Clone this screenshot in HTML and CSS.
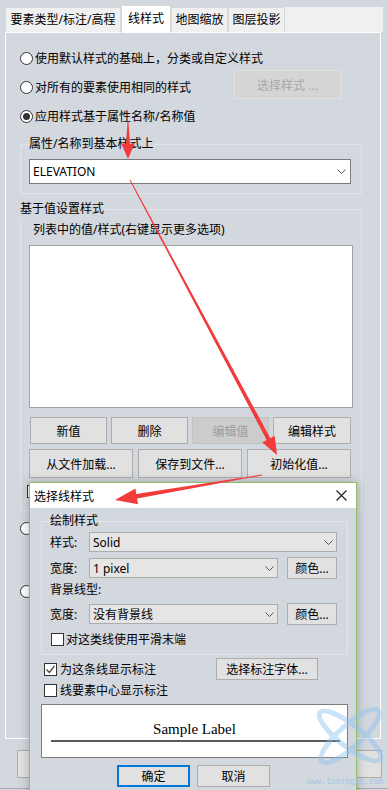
FILE: index.html
```html
<!DOCTYPE html>
<html lang="zh-CN">
<head>
    <meta charset="UTF-8">
    <title>线样式</title>
    <link rel="stylesheet" href="styles.css">
</head>
<body>
    <div class="app">
        <div class="tabs">
            <div class="tab tab-wide">要素类型/标注/高程</div>
            <div class="tab active">线样式</div>
            <div class="tab">地图缩放</div>
            <div class="tab">图层投影</div>
        </div>

        <div class="panel">
            <div class="option"><span class="radio"></span>使用默认样式的基础上，分类或自定义样式</div>
            <div class="option">
                <span class="radio"></span>对所有的要素使用相同的样式
                <button class="btn btn-style" disabled>选择样式 ...</button>
            </div>
            <div class="option"><span class="radio checked"></span>应用样式基于属性名称/名称值</div>

            <fieldset class="group group-field">
                <legend>属性/名称到基本样式上</legend>
                <div class="combo combo-white">
                    <span>ELEVATION</span>
                    <svg width="9" height="5" viewBox="0 0 9 5"><polyline points="0.5,0.5 4.5,4.5 8.5,0.5" fill="none" stroke="#555"/></svg>
                </div>
            </fieldset>

            <fieldset class="group group-values">
                <legend>基于值设置样式</legend>
                <div class="list-caption">列表中的值/样式(右键显示更多选项)</div>
                <div class="listbox"></div>
                <div class="btn-row btn-row-4">
                    <button class="btn">新值</button>
                    <button class="btn">删除</button>
                    <button class="btn btn-off" disabled>编辑值</button>
                    <button class="btn">编辑样式</button>
                </div>
                <div class="btn-row btn-row-3">
                    <button class="btn">从文件加载...</button>
                    <button class="btn">保存到文件...</button>
                    <button class="btn">初始化值...</button>
                </div>
                <span class="checkbox hidden-check"></span>
            </fieldset>

            <div class="option option-low"><span class="radio"></span></div>
            <div class="option option-low2"><span class="radio"></span></div>
        </div>

        <div class="footer">
            <button class="btn"></button>
            <button class="btn"></button>
        </div>
        <div class="status-line"></div>

        <!-- dialog window lying over the page -->
        <div class="dialog">
            <div class="dialog-title">
                <span>选择线样式</span>
                <svg width="11" height="11" viewBox="0 0 11 11"><path d="M0.5 0.5 L10.5 10.5 M10.5 0.5 L0.5 10.5" stroke="#222" stroke-width="1.2"/></svg>
            </div>
            <div class="dialog-body">
                <fieldset class="group draw-group">
                    <legend>绘制样式</legend>
                    <div class="form-row row-a">
                        <span class="form-label">样式:</span>
                        <div class="combo combo-gray combo-full">
                            <span>Solid</span>
                            <svg width="9" height="5" viewBox="0 0 9 5"><polyline points="0.5,0.5 4.5,4.5 8.5,0.5" fill="none" stroke="#555"/></svg>
                        </div>
                    </div>
                    <div class="form-row row-b">
                        <span class="form-label">宽度:</span>
                        <div class="combo combo-gray combo-short">
                            <span>1 pixel</span>
                            <svg width="9" height="5" viewBox="0 0 9 5"><polyline points="0.5,0.5 4.5,4.5 8.5,0.5" fill="none" stroke="#555"/></svg>
                        </div>
                        <button class="btn btn-color">颜色...</button>
                    </div>
                    <div class="sub-label">背景线型:</div>
                    <div class="form-row row-b">
                        <span class="form-label">宽度:</span>
                        <div class="combo combo-gray combo-short">
                            <span>没有背景线</span>
                            <svg width="9" height="5" viewBox="0 0 9 5"><polyline points="0.5,0.5 4.5,4.5 8.5,0.5" fill="none" stroke="#555"/></svg>
                        </div>
                        <button class="btn btn-color">颜色...</button>
                    </div>
                    <div class="check-row smooth-row"><span class="checkbox"></span>对这类线使用平滑末端</div>
                </fieldset>

                <div class="check-row label-row">
                    <span class="checkbox">
                        <svg width="11" height="11" viewBox="0 0 11 11"><polyline points="1.5,5.5 4.3,8.5 9.5,1.8" fill="none" stroke="#444" stroke-width="1.3"/></svg>
                    </span>为这条线显示标注
                    <button class="btn btn-font">选择标注字体...</button>
                </div>
                <div class="check-row center-row"><span class="checkbox"></span>线要素中心显示标注</div>

                <div class="sample">
                    <div class="sample-text">Sample Label</div>
                    <div class="sample-line"></div>
                </div>

                <div class="dialog-buttons">
                    <button class="btn btn-default">确定</button>
                    <button class="btn">取消</button>
                </div>
            </div>
        </div>

        <!-- annotation arrows and watermark -->
        <svg class="overlay" width="388" height="790" viewBox="0 0 388 790">
            <g class="watermark" fill="none" stroke="#8cc2ee" stroke-width="5" opacity="0.45">
                <ellipse cx="350" cy="736" rx="38" ry="11" transform="rotate(38 350 736)"/>
                <ellipse cx="350" cy="736" rx="38" ry="11" transform="rotate(-42 350 736)"/>
            </g>
            <text x="307" y="784" class="watermark-text" textLength="76">www.tuxingis.com</text>
            <g fill="#f23b3b">
                <polygon points="127.5,122 128.5,122 130,144 135,143 128,159 121,143 126,144"/>
                <polygon points="129.6,180.2 266.7,440 262.3,442.4 277,455 274.7,435.8 270.3,438.2 130.4,179.8"/>
                <polygon points="261.9,474.5 136.3,494.1 135.4,488.4 115,500 138,504.2 137.1,498.5 262.1,475.5"/>
            </g>
        </svg>
    </div>
</body>
</html>
```

FILE: styles.css
```css
body {
    margin: 0;
    background-color: #d3d7de;
    font-family: "Noto Sans", "Noto Sans CJK SC", sans-serif;
    font-size: 12px;
    color: #000;
}
.app {
    position: relative;
    width: 388px;
    height: 790px;
    overflow: hidden;
}
/* Tabs */
.tabs {
    display: flex;
    align-items: flex-start;
    height: 25px;
    margin: 7px 5px 0 5px;
    background-color: #f0f0f0;
}
.tab {
    box-sizing: border-box;
    width: 57px;
    height: 25px;
    line-height: 23px;
    border: 1px solid #d9d9d9;
    border-bottom: none;
    text-align: center;
    white-space: nowrap;
}
.tab-wide {
    width: 116px;
}
.tab.active {
    position: relative;
    z-index: 1;
    width: 50px;
    height: 28px;
    margin-top: -2px;
    line-height: 26px;
    background-color: #fff;
}
/* Main panel */
.panel {
    box-sizing: border-box;
    width: 376px;
    height: 707px;
    margin-left: 5px;
    border: 1px solid #fff;
    padding: 12px 0 0 14px;
}
.option {
    display: flex;
    align-items: center;
    height: 26px;
    gap: 2px;
    white-space: nowrap;
}
.option + .option {
    margin-top: 3px;
}
.radio {
    box-sizing: border-box;
    flex: none;
    display: flex;
    align-items: center;
    justify-content: center;
    width: 13px;
    height: 13px;
    border: 1px solid #333;
    border-radius: 50%;
    background-color: #fff;
}
.radio.checked::after {
    content: "";
    width: 7px;
    height: 7px;
    border-radius: 50%;
    background-color: #333;
}
.checkbox {
    box-sizing: border-box;
    flex: none;
    display: flex;
    align-items: center;
    justify-content: center;
    width: 13px;
    height: 13px;
    border: 1px solid #333;
    background-color: #fff;
}
/* Buttons */
.btn {
    box-sizing: border-box;
    padding: 0;
    font: inherit;
    color: #000;
    background-color: #e1e1e1;
    border: 1px solid #adadad;
    white-space: nowrap;
}
.btn-style {
    width: 107px;
    height: 29px;
    margin: 0 39px 5px auto;
    background-color: #d5d5d5;
    border-color: #e2e2e2;
    color: #a8a8a8;
}
.btn-off {
    background-color: #cccccc;
    border-color: #c2c2c2;
    color: #9d9d9d;
}
/* Group boxes */
.group {
    box-sizing: border-box;
    width: 342px;
    min-width: 0;
    margin: 0;
    border: 1px solid #e0e3e8;
}
.group legend {
    padding: 0;
    line-height: 16px;
}
.group-field {
    margin-top: 7px;
    padding: 7px 10px 9px 8px;
}
.combo {
    box-sizing: border-box;
    display: flex;
    align-items: center;
    justify-content: space-between;
    white-space: nowrap;
}
.combo-white {
    height: 25px;
    padding: 0 4px 0 3px;
    background-color: #fff;
    border: 1px solid #7a7a7a;
}
.group-values {
    margin-top: 7px;
    padding: 5px 0 12px 8px;
}
.group-values legend {
    margin-left: -9px;
}
.list-caption {
    margin-left: 4px;
    line-height: 16px;
}
.listbox {
    box-sizing: border-box;
    width: 324px;
    height: 163px;
    margin-top: 7px;
    background-color: #fff;
    border: 1px solid #a0a3a8;
}
.btn-row {
    display: flex;
}
.btn-row-4 {
    gap: 4px;
    margin: 9px 0 0 1px;
}
.btn-row-4 .btn {
    width: 77px;
    height: 27px;
}
.btn-row-4 .btn:last-child {
    width: 78px;
}
.btn-row-3 {
    gap: 5px;
    margin-top: 5px;
}
.btn-row-3 .btn {
    width: 104px;
    height: 29px;
}
.hidden-check {
    margin: 7px 0 0 -2px;
}
.option-low {
    margin-top: 4px;
}
.option + .option-low2 {
    margin-top: 37px;
}
.footer {
    display: flex;
    justify-content: space-between;
    height: 28px;
    margin-top: 11px;
    padding: 0 6px 0 17px;
}
.footer .btn {
    width: 100px;
    height: 28px;
}
.status-line {
    margin-top: 10px;
    border-top: 1px solid #a7a9ad;
}
/* Dialog */
.dialog {
    position: absolute;
    left: 29px;
    top: 482px;
    z-index: 2;
    box-sizing: border-box;
    width: 328px;
    height: 320px;
    border: 1px solid #8dbf67;
    background-color: #d3d7de;
    box-shadow: 0 0 10px rgba(0, 0, 0, 0.25);
}
.dialog-title {
    display: flex;
    align-items: center;
    justify-content: space-between;
    height: 25px;
    padding: 0 9px 0 4px;
    background-color: #fff;
}
.dialog-body {
    padding: 0 8px 0 11px;
}
.draw-group {
    width: 307px;
    margin-top: 5px;
    padding: 3px 10px 7px 8px;
}
.form-row {
    display: flex;
    align-items: center;
}
.row-a {
    height: 20px;
}
.row-b {
    height: 22px;
    margin-top: 5px;
    gap: 9px;
}
.form-label {
    width: 39px;
    flex: none;
}
.row-b .form-label {
    margin-right: -9px;
}
.combo-gray {
    height: 20px;
    padding: 0 3px 0 3px;
    background-color: #e5e5e5;
    border: 1px solid #acacac;
}
.combo-full {
    width: 248px;
}
.combo-short {
    width: 189px;
}
.btn-color {
    width: 50px;
    height: 22px;
}
.sub-label {
    margin-top: 3px;
    line-height: 16px;
}
.check-row {
    display: flex;
    align-items: center;
    gap: 2px;
    height: 16px;
    white-space: nowrap;
}
.smooth-row {
    margin: 6px 0 0 1px;
}
.label-row {
    height: 22px;
    margin: 3px 0 0 3px;
    gap: 3px;
}
.btn-font {
    width: 102px;
    height: 22px;
    margin: 0 30px 0 auto;
}
.center-row {
    margin: 2px 0 0 3px;
    gap: 3px;
}
.sample {
    box-sizing: border-box;
    height: 54px;
    margin-top: 6px;
    background-color: #fff;
    border: 1px solid #7d7d7d;
}
.sample-text {
    padding-top: 15px;
    font-family: "Liberation Serif", serif;
    font-size: 15px;
    line-height: 18px;
    text-align: center;
}
.sample-line {
    height: 2px;
    margin: 2px 7px 0 9px;
    background-color: #5a5a5a;
}
.dialog-buttons {
    display: flex;
    gap: 7px;
    margin-top: 7px;
    padding-left: 76px;
}
.dialog-buttons .btn {
    width: 73px;
    height: 22px;
}
.btn-default {
    border: 2px solid #0078d7;
}
/* Overlay */
.overlay {
    position: absolute;
    left: 0;
    top: 0;
    z-index: 3;
    pointer-events: none;
}
.watermark-text {
    font-family: "DejaVu Sans Mono", monospace;
    font-size: 8px;
    fill: #9cc3e6;
    opacity: 0.8;
}
```
